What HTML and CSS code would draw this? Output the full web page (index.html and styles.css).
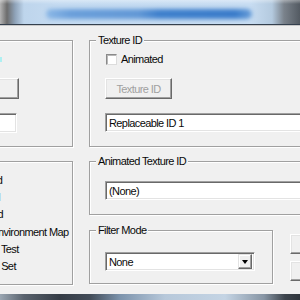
FILE: index.html
```html
<!DOCTYPE html>
<html>
<head>
<meta charset="utf-8">
<link rel="stylesheet" href="styles.css">
</head>
<body>
<div class="window">
  <div class="titlebar"><div class="title-blur"></div></div>
  <div class="client">
    <div class="col left-col">
      <div class="group g-left1">
        <div class="cyan-mark"></div>
        <div class="btn btn-left"></div>
        <div class="field field-left"></div>
      </div>
      <div class="group g-left2">
        <div class="opt"><span class="check"></span><span>Unshaded</span></div>
        <div class="opt"><span class="check"></span><span>Unfogged</span></div>
        <div class="opt"><span class="check"></span><span>Two Sided</span></div>
        <div class="opt"><span class="check"></span><span>Sphere Environment Map</span></div>
        <div class="opt"><span class="check"></span><span>No Depth Test</span></div>
        <div class="opt"><span class="check"></span><span>No Depth Set</span></div>
      </div>
    </div>
    <div class="col right-col">
      <div class="group g-tex">
        <span class="legend">Texture ID</span>
        <div class="check-row"><span class="check"></span><span class="check-label">Animated</span></div>
        <div class="btn btn-disabled">Texture ID</div>
        <div class="field field-wide">Replaceable ID 1</div>
      </div>
      <div class="group g-anim">
        <span class="legend">Animated Texture ID</span>
        <div class="field field-wide">(None)</div>
      </div>
      <div class="filter-row">
        <div class="group g-filter">
          <span class="legend">Filter Mode</span>
          <div class="field select"><span class="select-text">None</span><span class="arrow-btn"><span class="arrow"></span></span></div>
        </div>
        <div class="btn-col">
          <div class="btn btn-side"></div>
          <div class="btn btn-side"></div>
        </div>
      </div>
    </div>
  </div>
  <div class="bottom-frame"></div>
</div>
</body>
</html>
```
FILE: styles.css
```css
html, body {
  margin: 0;
  padding: 0;
  background: #f0f0f0;
}
.window {
  width: 300px;
  height: 300px;
  overflow: hidden;
  display: flex;
  flex-direction: column;
  background: #f0f0f0;
  font-family: "Liberation Sans", Arial, sans-serif;
  font-size: 11px;
  letter-spacing: -0.6px;
  color: #0a0a0a;
}
.titlebar {
  flex: none;
  height: 24px;
  border-bottom: 1px solid #34404e;
  background:
    linear-gradient(to bottom, rgba(255,255,255,0.35) 0, rgba(255,255,255,0) 4px),
    linear-gradient(to right, #b4b4b4 0, #6c6c6c 7px, #8ea2b8 15px, #bed5ec 24px, #c5dbf1 60px, #c8ddf2 250px, #b4cadf 272px, #7a828b 284px, #535a62 300px);
  display: flex;
}
.title-blur {
  margin: 9px 0 0 46px;
  width: 206px;
  height: 10px;
  border-radius: 5px;
  background: linear-gradient(to right, #8cb8e6 0, #6a9fda 12%, #6298d6 45%, #3f80cc 55%, #3b7cca 92%, #6a9fd9 100%);
  filter: blur(2px);
}
.client {
  flex: 1;
  display: flex;
  margin-left: -88px;
  padding-top: 14px;
  border-top: 1px solid #c9c9c9;
}
.col {
  display: flex;
  flex-direction: column;
  flex: none;
}
.left-col { width: 161px; }
.right-col { width: 320px; margin-left: 16px; }
.group {
  position: relative;
  box-sizing: border-box;
  border: 1px solid #a0a0a0;
  box-shadow: inset 1px 1px 0 #fff, 1px 1px 0 #fff;
}
.legend {
  position: absolute;
  top: -7px;
  left: 6px;
  padding: 0 2px;
  line-height: 13px;
  background: #f0f0f0;
  white-space: nowrap;
}
.g-left1 { height: 107px; padding-top: 16px; }
.g-left2 { height: 124px; margin-top: 14px; padding: 9px 0 0 29px; }
.cyan-mark {
  width: 2px;
  height: 5px;
  margin-left: 87px;
  background: #aef0f2;
}
.btn {
  box-sizing: border-box;
  background: #f0f0f0;
  border: 1px solid;
  border-color: #fff #696969 #696969 #fff;
  box-shadow: inset -1px -1px 0 #a0a0a0, inset 1px 1px 0 #e3e3e3;
  display: flex;
  align-items: center;
  justify-content: center;
  white-space: nowrap;
}
.btn-left { width: 80px; height: 21px; margin: 16px 0 0 26px; }
.field {
  box-sizing: border-box;
  background: #fff;
  border: 1px solid;
  border-color: #a0a0a0 #fff #fff #a0a0a0;
  box-shadow: inset 1px 1px 0 #696969, inset -1px -1px 0 #e3e3e3;
  display: flex;
  align-items: center;
  padding-left: 3px;
  white-space: nowrap;
}
.field-left { width: 78px; height: 20px; margin: 14px 0 0 26px; }
.opt {
  display: flex;
  align-items: center;
  height: 17.35px;
  white-space: nowrap;
}
.check {
  flex: none;
  box-sizing: border-box;
  width: 11px;
  height: 11px;
  background: #fff;
  border: 1px solid;
  border-color: #8a8a8a #dcdcdc #dcdcdc #8a8a8a;
  box-shadow: inset 1px 1px 0 #b8b8b8;
  margin-right: 4px;
}
.g-tex { height: 107px; padding: 12px 0 0 15px; }
.check-row {
  display: flex;
  align-items: center;
  height: 12px;
  margin-left: 1px;
}
.btn-disabled {
  width: 67px;
  height: 21px;
  margin-top: 13px;
  color: #a0a0a0;
}
.field-wide { width: 300px; height: 19px; margin-top: 14px; }
.g-anim { height: 54px; margin-top: 14px; padding: 19px 0 0 15px; }
.g-anim .field-wide { margin-top: 0; }
.filter-row {
  display: flex;
  margin-top: 15px;
}
.g-filter { width: 184px; height: 54px; padding: 21px 0 0 15px; flex: none; }
.select {
  width: 150px;
  height: 19px;
  padding: 0 2px 0 3px;
  justify-content: space-between;
}
.arrow-btn {
  box-sizing: border-box;
  width: 14px;
  height: 15px;
  background: #f0f0f0;
  border: 1px solid;
  border-color: #e3e3e3 #696969 #696969 #e3e3e3;
  box-shadow: inset -1px -1px 0 #a0a0a0, inset 1px 1px 0 #fff;
  display: flex;
  align-items: center;
  justify-content: center;
}
.arrow {
  width: 0;
  height: 0;
  border-left: 3.5px solid transparent;
  border-right: 3.5px solid transparent;
  border-top: 4px solid #000;
}
.btn-col {
  display: flex;
  flex-direction: column;
  gap: 7px;
  margin-left: 17px;
  padding-top: 4px;
}
.btn-side { width: 80px; height: 20px; }
.bottom-frame {
  flex: none;
  height: 6px;
  background: linear-gradient(to right, #9aa6b2 0, #59626d 8%, #353c45 20%, #424c58 30%, #7c93ac 40%, #b7c8da 55%, #c4d4e4 75%, #8795a4 88%, #3d444c 95%, #2f353c 100%);
}
```
